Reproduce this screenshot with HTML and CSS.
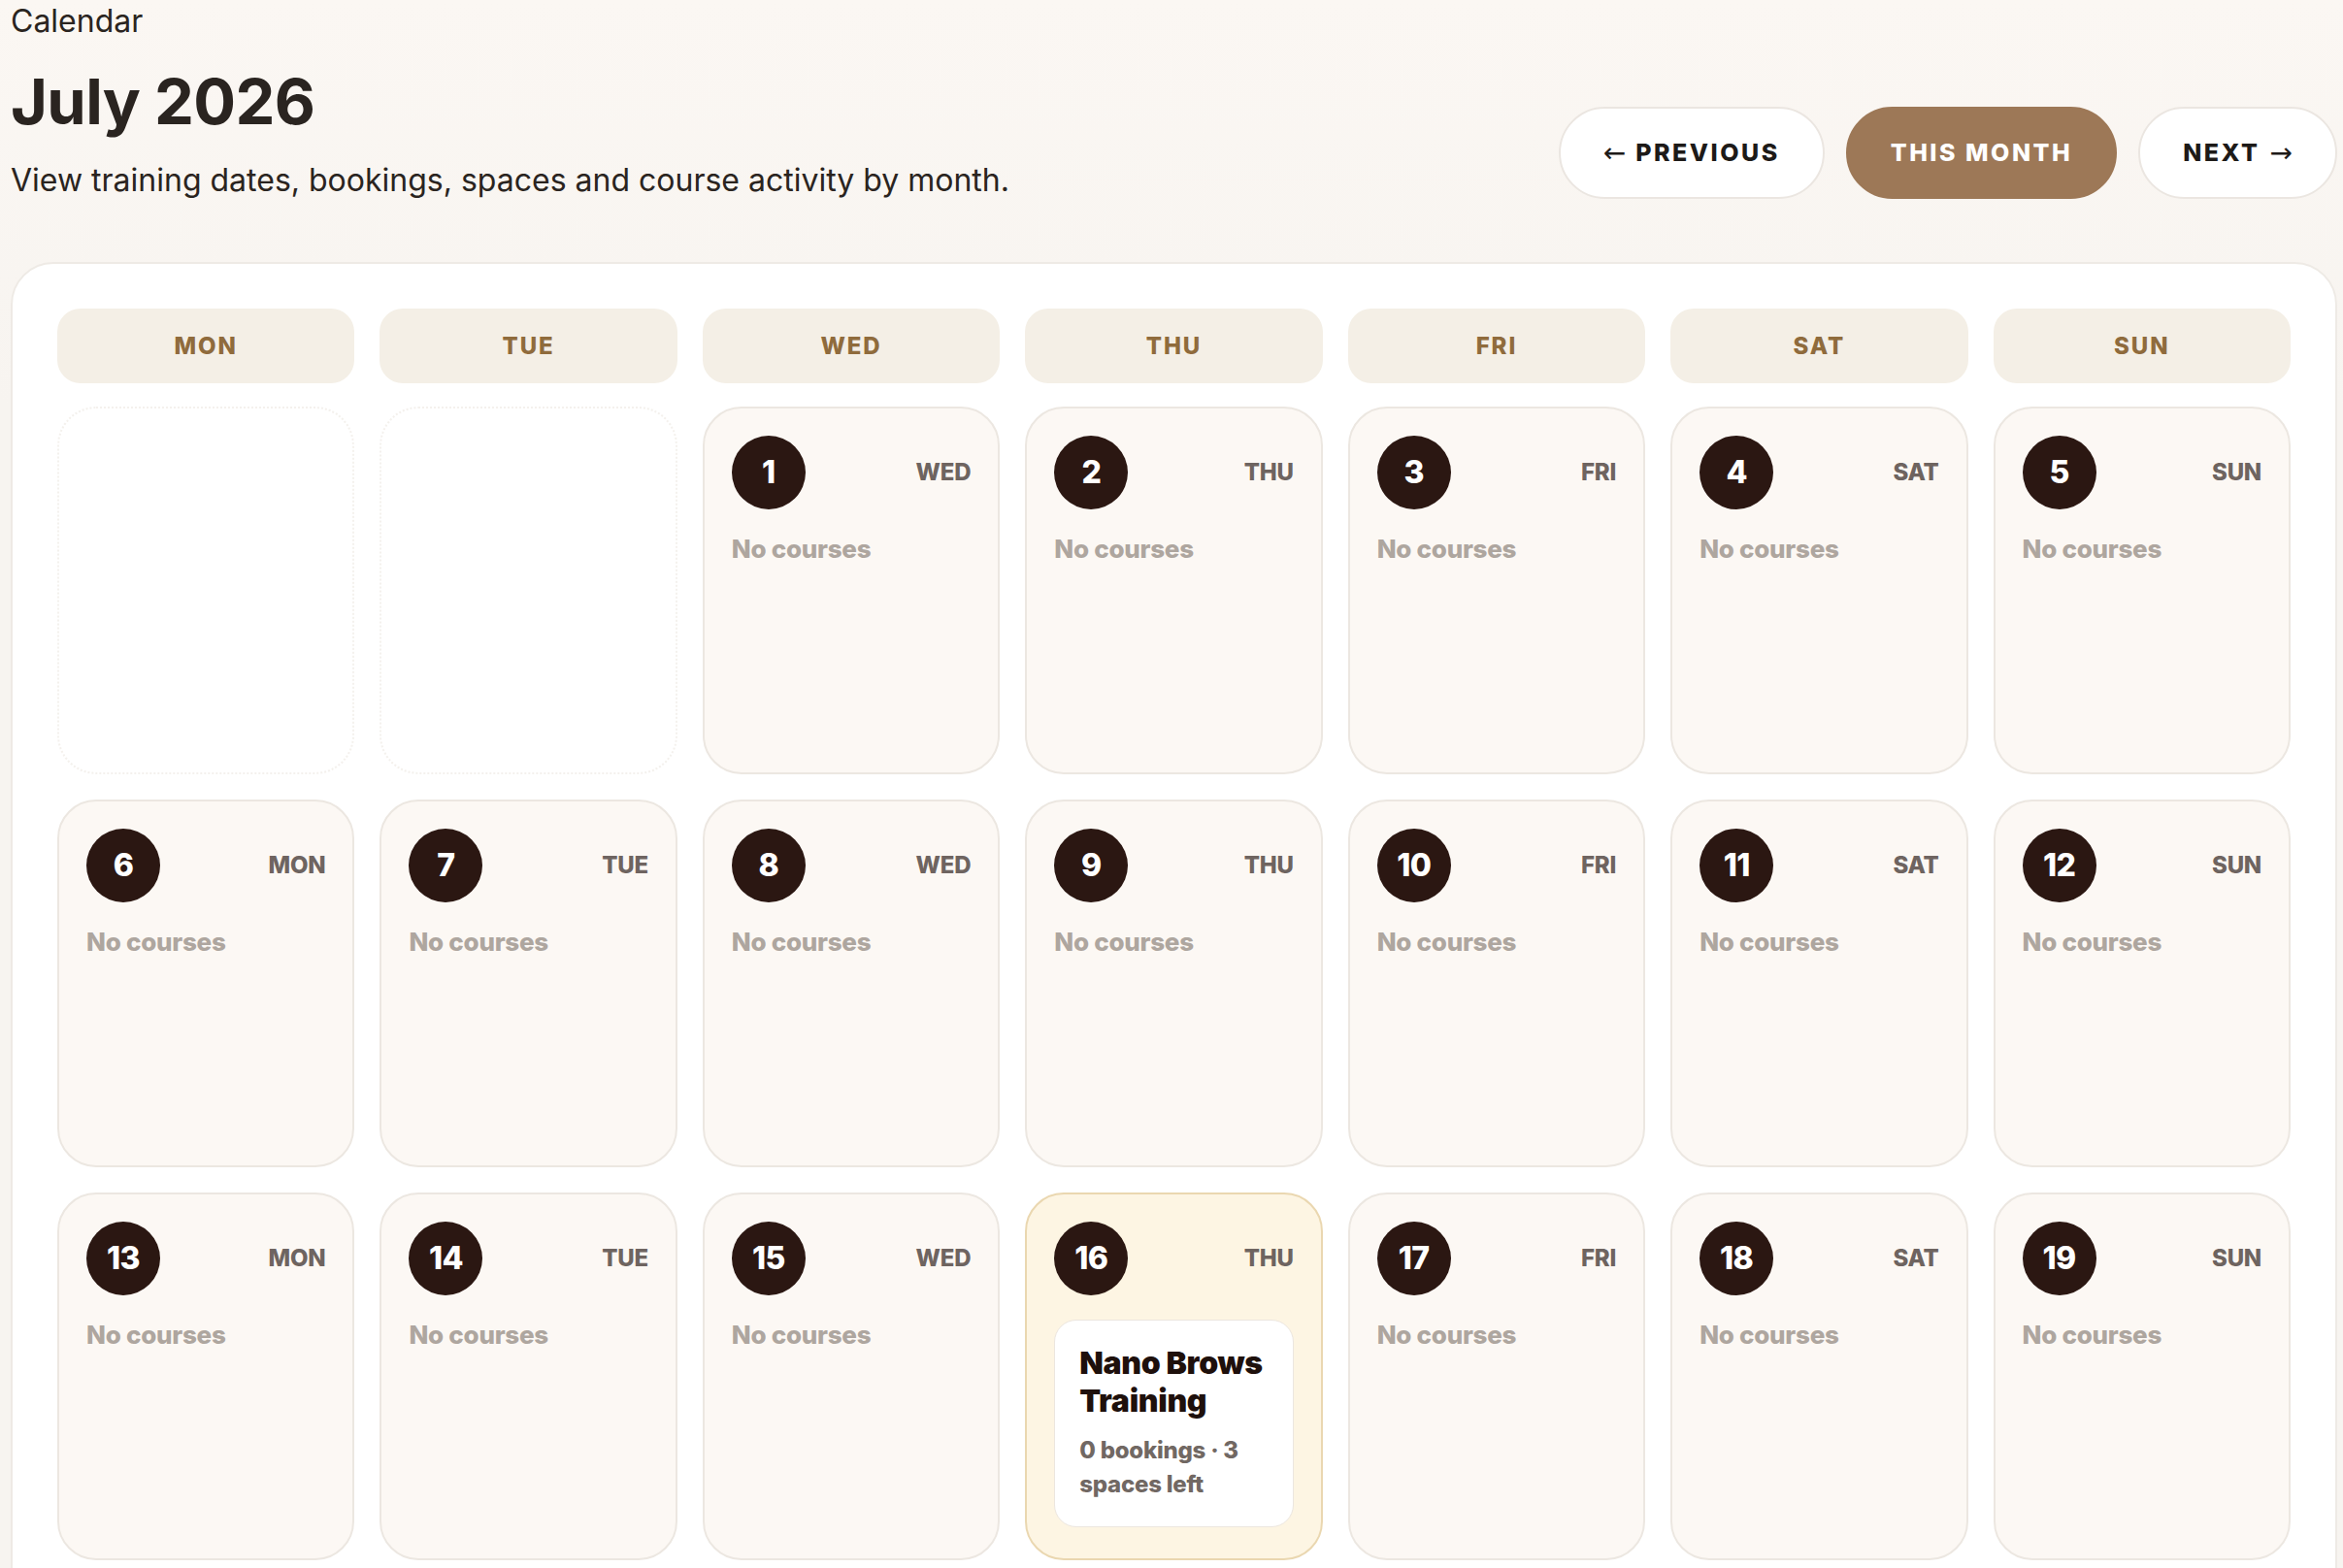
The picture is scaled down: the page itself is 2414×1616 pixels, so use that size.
FILE: index.html
```html
<!DOCTYPE html>
<html lang="en">
<head>
    <meta charset="UTF-8">
    <meta name="viewport" content="width=device-width, initial-scale=1.0">
    <title>Calendar - July 2026</title>
    <link rel="stylesheet" href="styles.css">
</head>
<body>
    <div class="page">
        <div class="crumb">Calendar</div>

        <div class="top">
            <div class="title-block">
                <h1>July 2026</h1>
                <p class="subtitle">View training dates, bookings, spaces and course activity by month.</p>
            </div>
            <div class="month-nav">
                <a href="#" class="btn"><span class="arrow">&larr;</span> PREVIOUS</a>
                <a href="#" class="btn btn-current">THIS MONTH</a>
                <a href="#" class="btn">NEXT <span class="arrow">&rarr;</span></a>
            </div>
        </div>

        <div class="calendar">
            <div class="weekdays">
                <div class="weekday">MON</div>
                <div class="weekday">TUE</div>
                <div class="weekday">WED</div>
                <div class="weekday">THU</div>
                <div class="weekday">FRI</div>
                <div class="weekday">SAT</div>
                <div class="weekday">SUN</div>
            </div>

            <div class="days">
                <!-- week 1 -->
                <div class="day empty"></div>
                <div class="day empty"></div>
                <div class="day"><div class="day-head"><span class="num">1</span><span class="dow">WED</span></div><p class="none">No courses</p></div>
                <div class="day"><div class="day-head"><span class="num">2</span><span class="dow">THU</span></div><p class="none">No courses</p></div>
                <div class="day"><div class="day-head"><span class="num">3</span><span class="dow">FRI</span></div><p class="none">No courses</p></div>
                <div class="day"><div class="day-head"><span class="num">4</span><span class="dow">SAT</span></div><p class="none">No courses</p></div>
                <div class="day"><div class="day-head"><span class="num">5</span><span class="dow">SUN</span></div><p class="none">No courses</p></div>

                <!-- week 2 -->
                <div class="day"><div class="day-head"><span class="num">6</span><span class="dow">MON</span></div><p class="none">No courses</p></div>
                <div class="day"><div class="day-head"><span class="num">7</span><span class="dow">TUE</span></div><p class="none">No courses</p></div>
                <div class="day"><div class="day-head"><span class="num">8</span><span class="dow">WED</span></div><p class="none">No courses</p></div>
                <div class="day"><div class="day-head"><span class="num">9</span><span class="dow">THU</span></div><p class="none">No courses</p></div>
                <div class="day"><div class="day-head"><span class="num">10</span><span class="dow">FRI</span></div><p class="none">No courses</p></div>
                <div class="day"><div class="day-head"><span class="num">11</span><span class="dow">SAT</span></div><p class="none">No courses</p></div>
                <div class="day"><div class="day-head"><span class="num">12</span><span class="dow">SUN</span></div><p class="none">No courses</p></div>

                <!-- week 3 -->
                <div class="day"><div class="day-head"><span class="num">13</span><span class="dow">MON</span></div><p class="none">No courses</p></div>
                <div class="day"><div class="day-head"><span class="num">14</span><span class="dow">TUE</span></div><p class="none">No courses</p></div>
                <div class="day"><div class="day-head"><span class="num">15</span><span class="dow">WED</span></div><p class="none">No courses</p></div>
                <div class="day has-course">
                    <div class="day-head"><span class="num">16</span><span class="dow">THU</span></div>
                    <div class="course">
                        <div class="course-title">Nano Brows Training</div>
                        <div class="course-meta">0 bookings · 3 spaces left</div>
                    </div>
                </div>
                <div class="day"><div class="day-head"><span class="num">17</span><span class="dow">FRI</span></div><p class="none">No courses</p></div>
                <div class="day"><div class="day-head"><span class="num">18</span><span class="dow">SAT</span></div><p class="none">No courses</p></div>
                <div class="day"><div class="day-head"><span class="num">19</span><span class="dow">SUN</span></div><p class="none">No courses</p></div>

                <!-- week 4 -->
                <div class="day"><div class="day-head"><span class="num">20</span><span class="dow">MON</span></div><p class="none">No courses</p></div>
                <div class="day"><div class="day-head"><span class="num">21</span><span class="dow">TUE</span></div><p class="none">No courses</p></div>
                <div class="day"><div class="day-head"><span class="num">22</span><span class="dow">WED</span></div><p class="none">No courses</p></div>
                <div class="day"><div class="day-head"><span class="num">23</span><span class="dow">THU</span></div><p class="none">No courses</p></div>
                <div class="day"><div class="day-head"><span class="num">24</span><span class="dow">FRI</span></div><p class="none">No courses</p></div>
                <div class="day"><div class="day-head"><span class="num">25</span><span class="dow">SAT</span></div><p class="none">No courses</p></div>
                <div class="day"><div class="day-head"><span class="num">26</span><span class="dow">SUN</span></div><p class="none">No courses</p></div>

                <!-- week 5 -->
                <div class="day"><div class="day-head"><span class="num">27</span><span class="dow">MON</span></div><p class="none">No courses</p></div>
                <div class="day"><div class="day-head"><span class="num">28</span><span class="dow">TUE</span></div><p class="none">No courses</p></div>
                <div class="day"><div class="day-head"><span class="num">29</span><span class="dow">WED</span></div><p class="none">No courses</p></div>
                <div class="day"><div class="day-head"><span class="num">30</span><span class="dow">THU</span></div><p class="none">No courses</p></div>
                <div class="day"><div class="day-head"><span class="num">31</span><span class="dow">FRI</span></div><p class="none">No courses</p></div>
                <div class="day empty"></div>
                <div class="day empty"></div>
            </div>
        </div>
    </div>
</body>
</html>
```

FILE: styles.css
```css
body {
    font-family: 'Inter', 'Noto Sans', sans-serif;
    margin: 0;
    background: linear-gradient(#fbf7f3, #f7f4f0 420px);
    background-color: #f7f4f0;
    color: #2a2420;
}
.page {
    padding: 3px 6px 60px 11px;
}
.crumb {
    font-size: 32px;
    line-height: 38px;
}
.top {
    display: flex;
    justify-content: space-between;
    align-items: flex-end;
}
h1 {
    font-size: 65px;
    font-weight: 700;
    line-height: 1.1;
    letter-spacing: -0.01em;
    margin: 28px 0 0 0;
}
.subtitle {
    font-size: 32px;
    line-height: 38px;
    margin: 26px 0 0 0;
}
.month-nav {
    display: flex;
    gap: 22px;
}
.btn {
    display: inline-flex;
    align-items: center;
    gap: 10px;
    height: 95px;
    box-sizing: border-box;
    padding: 0 44px;
    border: 2px solid #ebe6e1;
    border-radius: 48px;
    background-color: #ffffff;
    color: #1d1a18;
    font-size: 25px;
    font-weight: 800;
    letter-spacing: 0.1em;
    text-decoration: none;
}
.btn .arrow {
    font-family: 'DejaVu Sans', sans-serif;
    font-size: 28px;
    font-weight: 400;
    letter-spacing: 0;
}
.btn-current {
    background-color: #9d7857;
    border-color: #9d7857;
    color: #ffffff;
}
.calendar {
    margin-top: 65px;
    background-color: #ffffff;
    border: 2px solid #eeeae5;
    border-radius: 44px;
    padding: 46px;
}
.weekdays, .days {
    display: grid;
    grid-template-columns: repeat(7, 1fr);
    gap: 26px;
}
.weekdays {
    margin-bottom: 24px;
}
.weekday {
    height: 77px;
    border-radius: 24px;
    background-color: #f4efe6;
    color: #8f6b3c;
    font-size: 24px;
    font-weight: 800;
    letter-spacing: 0.08em;
    display: flex;
    align-items: center;
    justify-content: center;
}
.day {
    min-height: 379px;
    box-sizing: border-box;
    padding: 28px;
    border: 2px solid #ece7e1;
    border-radius: 40px;
    background-color: #fcf8f4;
}
.day.empty {
    background-color: #ffffff;
    border: 2px dotted #f4f1ed;
}
.day.has-course {
    background-color: #fdf5e3;
    border-color: #ead7b0;
}
.day-head {
    display: flex;
    justify-content: space-between;
    align-items: center;
}
.num {
    width: 76px;
    height: 76px;
    border-radius: 50%;
    background-color: #2b1712;
    color: #ffffff;
    font-size: 32px;
    font-weight: 800;
    letter-spacing: -0.02em;
    display: flex;
    align-items: center;
    justify-content: center;
}
.dow {
    color: #6e6460;
    font-size: 24px;
    font-weight: 800;
    letter-spacing: -0.01em;
}
.none {
    margin: 25px 0 0 0;
    color: #aea69f;
    font-size: 26px;
    font-weight: 800;
    letter-spacing: -0.01em;
    line-height: 1.2;
}
.course {
    margin-top: 25px;
    background-color: #ffffff;
    border: 1px solid #ece6df;
    border-radius: 23px;
    padding: 24px 16px 26px 25px;
}
.course-title {
    color: #1e100c;
    font-size: 32px;
    font-weight: 900;
    line-height: 39px;
    letter-spacing: -0.01em;
}
.course-meta {
    margin-top: 14px;
    color: #716863;
    font-size: 24px;
    font-weight: 800;
    letter-spacing: -0.01em;
    line-height: 35px;
}
```
